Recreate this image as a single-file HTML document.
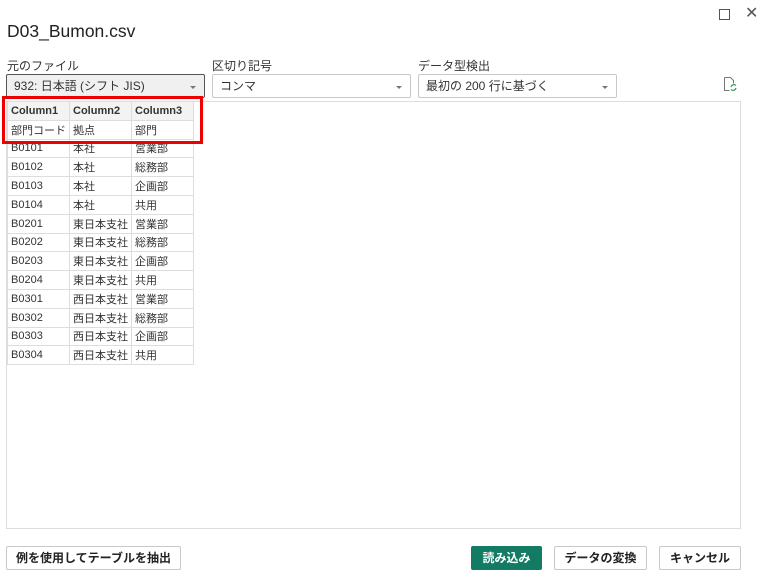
<html><head><style>
body{margin:0;width:765px;height:578px;background:#fff;font-family:"Liberation Sans","Noto Sans CJK JP",sans-serif;position:relative;overflow:hidden;color:#222}
.a{position:absolute}
.lbl{font-size:12px;color:#333}
.dd{position:absolute;top:74px;border:1px solid #c8c8c8;border-radius:2px;font-size:12px;line-height:22px;padding-left:7px;box-sizing:border-box;height:24px;color:#333}
.dd:after{content:"";position:absolute;right:8px;top:11px;border:3px solid transparent;border-top:3px solid #777}
table{border-collapse:collapse;font-size:11px;position:absolute;left:7px;top:101px}
td{border:1px solid #ddd;height:18.8px;padding:0 0 0 3px;width:58px;color:#333;white-space:nowrap}
tr.h td{background:#f3f3f3;font-weight:bold}
.btn{position:absolute;top:546px;height:24px;border:1px solid #c8c8c8;border-radius:2px;font-size:12px;font-weight:bold;text-align:center;line-height:22px;box-sizing:border-box;color:#222;background:#fff}
</style></head><body>
<div class="a" style="left:7px;top:21px;font-size:17.5px;color:#222">D03_Bumon.csv</div>
<div class="a" style="left:719px;top:9px;width:9px;height:9px;border:1px solid #555"></div>
<div class="a" style="left:745px;top:3px;font-size:16px;color:#555">✕</div>
<div class="a lbl" style="left:7px;top:57px">元のファイル</div>
<div class="a lbl" style="left:212px;top:57px">区切り記号</div>
<div class="a lbl" style="left:418px;top:57px">データ型検出</div>
<div class="dd" style="left:6px;width:199px;background:#f0f0f0;border-color:#555">932: 日本語 (シフト JIS)</div>
<div class="dd" style="left:212px;width:199px">コンマ</div>
<div class="dd" style="left:418px;width:199px">最初の 200 行に基づく</div>
<svg class="a" style="left:723px;top:76px" width="14" height="16" viewBox="0 0 14 16"><path d="M1.5 1.5h6l3 3v3M1.5 1.5v13h5" fill="none" stroke="#777"/><path d="M8 11a3 3 0 0 1 5-1.5M13 12a3 3 0 0 1-5 1.5" fill="none" stroke="#2a9a5a" stroke-width="1.2"/></svg>
<div class="a" style="left:6px;top:101px;width:733px;height:426px;border:1px solid #ddd"></div>
<table>
<tr class="h"><td>Column1</td><td>Column2</td><td>Column3</td></tr>
<tr><td>部門コード</td><td>拠点</td><td>部門</td></tr>
<tr><td>B0101</td><td>本社</td><td>営業部</td></tr>
<tr><td>B0102</td><td>本社</td><td>総務部</td></tr>
<tr><td>B0103</td><td>本社</td><td>企画部</td></tr>
<tr><td>B0104</td><td>本社</td><td>共用</td></tr>
<tr><td>B0201</td><td>東日本支社</td><td>営業部</td></tr>
<tr><td>B0202</td><td>東日本支社</td><td>総務部</td></tr>
<tr><td>B0203</td><td>東日本支社</td><td>企画部</td></tr>
<tr><td>B0204</td><td>東日本支社</td><td>共用</td></tr>
<tr><td>B0301</td><td>西日本支社</td><td>営業部</td></tr>
<tr><td>B0302</td><td>西日本支社</td><td>総務部</td></tr>
<tr><td>B0303</td><td>西日本支社</td><td>企画部</td></tr>
<tr><td>B0304</td><td>西日本支社</td><td>共用</td></tr>
</table>
<div class="a" style="left:2px;top:96px;width:195px;height:42px;border:3px solid #e00"></div>
<div class="btn" style="left:6px;width:175px">例を使用してテーブルを抽出</div>
<div class="btn" style="left:471px;width:71px;background:#137a63;border-color:#137a63;color:#fff">読み込み</div>
<div class="btn" style="left:554px;width:93px">データの変換</div>
<div class="btn" style="left:659px;width:82px">キャンセル</div>
</body></html>
